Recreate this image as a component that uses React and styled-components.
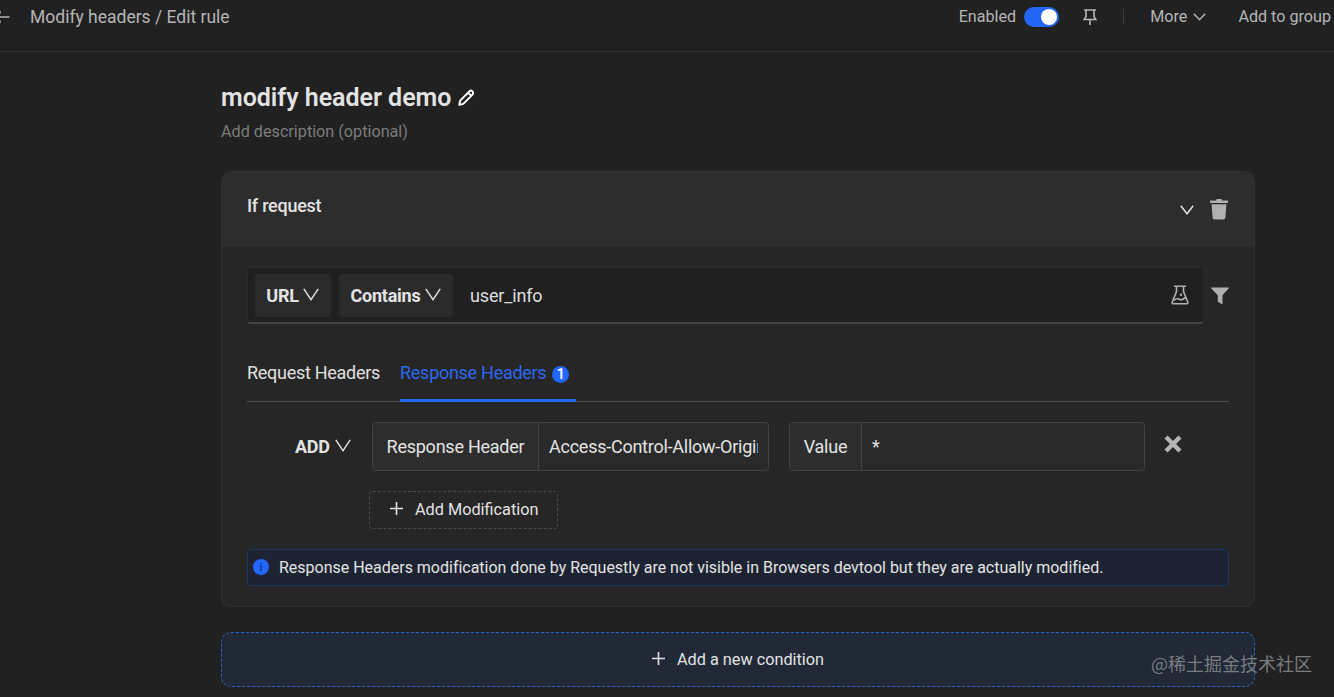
import React from 'react';
import styled, { createGlobalStyle } from 'styled-components';

const GlobalStyle = createGlobalStyle`
  * {
    box-sizing: border-box;
  }
  body {
    margin: 0;
    background: #212121;
    color: #e3e3e3;
    font-family: Roboto, "Noto Sans CJK SC", sans-serif;
    overflow: hidden;
  }
  button, input {
    font-family: inherit;
    color: inherit;
  }
`;

function Chevron({ width, height, stroke = 1.5 }) {
  return (
    <svg width={width} height={height} viewBox={`0 0 ${width} ${height}`}>
      <path
        d={`M.8 .8L${width / 2} ${height - 1.3}L${width - 0.8} .8`}
        fill="none"
        stroke="currentColor"
        strokeWidth={stroke}
      />
    </svg>
  );
}

function Plus() {
  return (
    <svg width="13" height="13" viewBox="0 0 13 13">
      <path d="M6.5 0V13M0 6.5H13" stroke="currentColor" strokeWidth="1.6" />
    </svg>
  );
}

function App() {
  return (
    <Page>
      <GlobalStyle />
      <TopBar>
        <BackIcon width="10" height="14" viewBox="0 0 10 14">
          <path d="M-1 7H9.5M0 3.5V1M0 10.5V13" stroke="currentColor" strokeWidth="1.5" fill="none" />
        </BackIcon>
        <Crumb>Modify headers / Edit rule</Crumb>
        <Enabled>Enabled</Enabled>
        <Toggle><Knob /></Toggle>
        <PinIcon width="14" height="16" viewBox="0 0 14 16">
          <path d="M1 1H13M3 1V7.5L1.2 10.5H12.8L11 7.5V1M7 10.5V16" stroke="currentColor" strokeWidth="1.6" fill="none" />
        </PinIcon>
        <Divider />
        <More>More <Chevron width={13} height={8} stroke={1.6} /></More>
        <Group>Add to group</Group>
      </TopBar>

      <Content>
        <Title>
          <TitleText>modify header demo</TitleText>
          <svg width="17" height="17" viewBox="0 0 16 16">
            <path d="M1.2 14.8L2 11L10.9 2.1Q12.2 .8 13.5 2.1T13.9 5.1L5 14Z M9.5 3.5L12.5 6.5" stroke="#fff" strokeWidth="1.8" fill="none" strokeLinejoin="round" />
          </svg>
        </Title>
        <Description>Add description (optional)</Description>

        <Card>
          <CardHeader>
            <CardTitle>If request</CardTitle>
            <HeaderIcons>
              <Chevron width={14} height={10} />
              <TrashIcon width="18" height="21" viewBox="0 0 18 21">
                <path d="M0 1.4H6L6.6 0H11.4L12 1.4H18V4H0Z M1.6 5.2H16.4L15.4 18.6Q15.2 20.5 13.4 20.5H4.6Q2.8 20.5 2.6 18.6Z" fill="currentColor" />
              </TrashIcon>
            </HeaderIcons>
          </CardHeader>
          <CardBody>
            <SourceRow>
              <SourceBox>
                <Picker $width="76px"><b>URL</b><Chevron width={16} height={13} stroke={1.4} /></Picker>
                <Picker $width="114px"><b>Contains</b><Chevron width={16} height={13} stroke={1.4} /></Picker>
                <SourceValue>user_info</SourceValue>
                <svg width="18" height="20" viewBox="0 0 18 20">
                  <path d="M3 1.2H15M5.5 1.2V6.5L1.2 17.2Q.9 18.8 2.2 18.8H15.8Q17.1 18.8 16.8 17.2L12.5 6.5V1.2M3 15.2Q6 12.8 8.5 14.3T14.6 12.4" stroke="currentColor" strokeWidth="1.6" fill="none" />
                  <circle cx="10" cy="9.8" r="1.2" fill="currentColor" />
                </svg>
              </SourceBox>
              <FilterIcon width="18" height="18" viewBox="0 0 18 18">
                <path d="M.8 .5H17.2Q18.2 .7 17.6 1.6L11.5 8.2V17.5L6.8 14.8V8.2L.4 1.6Q-.2 .7 .8 .5Z" fill="currentColor" />
              </FilterIcon>
            </SourceRow>

            <Tabs>
              <Tab>Request Headers</Tab>
              <Tab $active>Response Headers<Badge>1</Badge></Tab>
            </Tabs>

            <Modification>
              <Action><b>ADD</b><Chevron width={16} height={13} stroke={1.4} /></Action>
              <Field $width="397px">
                <Addon $width="166px">Response Header</Addon>
                <FieldInput defaultValue="Access-Control-Allow-Origin" />
              </Field>
              <Field $width="356px" $gap="20px">
                <Addon $width="72px">Value</Addon>
                <FieldInput defaultValue="*" />
              </Field>
              <RemoveIcon width="18" height="18" viewBox="0 0 18 18">
                <path d="M2 2L16 16M16 2L2 16" stroke="currentColor" strokeWidth="4.4" />
              </RemoveIcon>
            </Modification>

            <AddModification><Plus /><span>Add Modification</span></AddModification>

            <Info>
              <svg width="16" height="16" viewBox="0 0 16 16">
                <circle cx="8" cy="8" r="8" fill="#2166ff" />
                <path d="M8 4V5.2M8 6.2V12" stroke="#1b3f96" strokeWidth="1.8" />
              </svg>
              <InfoText>Response Headers modification done by Requestly are not visible in Browsers devtool but they are actually modified.</InfoText>
            </Info>
          </CardBody>
        </Card>

        <AddCondition><Plus /><span>Add a new condition</span></AddCondition>
      </Content>
      <Watermark>@稀土掘金技术社区</Watermark>
    </Page>
  );
}

export default App;

const Page = styled.div`
  position: relative;
  width: 1334px;
  height: 697px;
  overflow: hidden;
  background: #212121;
`;
const TopBar = styled.div`
  display: flex;
  align-items: center;
  height: 52px;
  padding-bottom: 18px;
  border-bottom: 1px solid #303030;
  color: #b5b5b5;
  font-size: 16.15px;
  white-space: nowrap;
`;
const BackIcon = styled.svg`
  flex: none;
`;
const Crumb = styled.div`
  margin: 0 0 0 20px;
  font-size: 17.5px;
  line-height: 20px;
`;
const Enabled = styled.div`
  margin-left: auto;
`;
const Toggle = styled.div`
  display: flex;
  justify-content: flex-end;
  width: 35px;
  height: 20px;
  margin-left: 8px;
  padding: 2px;
  border-radius: 10px;
  background: #2166f5;
`;
const Knob = styled.div`
  width: 16px;
  height: 16px;
  border-radius: 50%;
  background: #fff;
`;
const PinIcon = styled.svg`
  margin-left: 24px;
`;
const Divider = styled.div`
  width: 1px;
  height: 15px;
  margin-left: 26px;
  background: #3d3d3d;
`;
const More = styled.div`
  display: flex;
  align-items: center;
  gap: 6px;
  margin-left: 26px;
`;
const Group = styled.div`
  margin: 0 3px 0 32px;
`;
const Content = styled.div`
  width: 1034px;
  margin-left: 221px;
`;
const Title = styled.div`
  display: flex;
  align-items: center;
  gap: 7px;
  height: 30px;
  margin-top: 30px;
`;
const TitleText = styled.div`
  font-size: 25px;
  font-weight: 600;
  letter-spacing: -0.03px;
  white-space: nowrap;
`;
const Description = styled.div`
  height: 20px;
  margin-top: 10px;
  color: #7c7c7c;
  font-size: 16.2px;
  line-height: 20px;
`;
const Card = styled.div`
  height: 436px;
  margin-top: 29px;
  border: 1px solid #303030;
  border-radius: 10px;
  background: #262626;
  overflow: hidden;
`;
const CardHeader = styled.div`
  display: flex;
  justify-content: space-between;
  height: 75px;
  padding: 0 26px 0 25px;
  background: #2d2d2d;
`;
const CardTitle = styled.div`
  padding-top: 23px;
  font-size: 18px;
  font-weight: 500;
  letter-spacing: -0.25px;
  line-height: 22px;
`;
const HeaderIcons = styled.div`
  display: flex;
  align-items: center;
  gap: 16px;
`;
const TrashIcon = styled.svg`
  color: #b0b0b0;
`;
const CardBody = styled.div`
  padding: 20px 25px;
`;
const SourceRow = styled.div`
  display: flex;
  align-items: center;
  color: #b0b0b0;
`;
const SourceBox = styled.div`
  display: flex;
  align-items: center;
  width: 957px;
  height: 57px;
  padding: 0 14px 0 7px;
  border: 1px solid #2b2b2b;
  border-bottom: 2px solid #444;
  border-radius: 4px;
  background: #202020;
`;
const Picker = styled.div`
  display: flex;
  align-items: center;
  justify-content: center;
  gap: 4px;
  width: ${(props) => props.$width};
  height: 43px;
  margin-right: 8px;
  padding-right: 1px;
  border-radius: 4px;
  background: #2b2b2b;
  color: #e3e3e3;
  font-size: 18px;
  letter-spacing: -0.23px;

  svg {
    margin-top: -2px;
  }
`;
const SourceValue = styled.div`
  flex: 1;
  padding-left: 9px;
  color: #dedede;
  font-size: 18px;
  letter-spacing: -0.15px;
`;
const FilterIcon = styled.svg`
  margin-left: 7px;
`;
const Tabs = styled.div`
  display: flex;
  gap: 20px;
  height: 54px;
  margin-top: 24px;
  border-bottom: 1px solid #4c4c4c;
`;
const Tab = styled.div`
  display: flex;
  align-items: center;
  height: 54px;
  padding: 0 ${(props) => (props.$active ? '7px' : '0')} 2px 0;
  border-bottom: 3px solid ${(props) => (props.$active ? '#2469ec' : 'transparent')};
  color: ${(props) => (props.$active ? '#2b69ef' : '#e0e0e0')};
  font-size: 18px;
  letter-spacing: -0.28px;
  white-space: nowrap;
`;
const Badge = styled.div`
  width: 17px;
  height: 17px;
  margin: 3px 0 0 6px;
  border-radius: 50%;
  background: #2166ff;
  color: #fff;
  font-size: 15px;
  font-weight: 500;
  letter-spacing: 0;
  line-height: 17px;
  text-align: center;
`;
const Modification = styled.div`
  display: flex;
  align-items: center;
  margin-top: 20px;
`;
const Action = styled.div`
  display: flex;
  align-items: center;
  gap: 5px;
  width: 125px;
  padding-left: 48px;
  font-size: 18px;
  letter-spacing: -0.25px;

  svg {
    margin-top: -3px;
  }
`;
const Field = styled.div`
  display: flex;
  flex: none;
  width: ${(props) => props.$width};
  height: 49px;
  margin-left: ${(props) => props.$gap || '0'};
  border: 1px solid #424242;
  border-radius: 4px;
  background: #2a2a2a;
  overflow: hidden;
`;
const Addon = styled.div`
  display: flex;
  flex: none;
  align-items: center;
  justify-content: center;
  width: ${(props) => props.$width};
  border-right: 1px solid #424242;
  background: #2d2d2d;
  font-size: 18px;
  letter-spacing: -0.24px;
  white-space: nowrap;
`;
const FieldInput = styled.input`
  flex: 1;
  min-width: 0;
  padding: 0 10px;
  border: 0;
  outline: 0;
  background: transparent;
  font-size: 18px;
  letter-spacing: -0.25px;
`;
const RemoveIcon = styled.svg`
  margin: -5px 0 0 19px;
  color: #b5b5b5;
`;
const AddModification = styled.button`
  display: flex;
  align-items: center;
  gap: 12px;
  width: 189px;
  height: 38px;
  margin: 20px 0 0 122px;
  padding: 0 0 1px 20px;
  border: 1px dashed #494949;
  border-radius: 4px;
  background: #262626;
  font-size: 16.25px;
  white-space: nowrap;

  svg {
    margin-top: -2px;
  }
`;
const Info = styled.div`
  display: flex;
  align-items: center;
  gap: 10px;
  height: 37px;
  margin-top: 20px;
  padding-left: 5px;
  border: 1px solid #1d385d;
  border-radius: 4px;
  background: #1e2333;

  svg {
    margin-top: -1px;
  }
`;
const InfoText = styled.div`
  font-size: 16px;
  letter-spacing: -0.01px;
  white-space: nowrap;
`;
const AddCondition = styled.button`
  display: flex;
  align-items: center;
  justify-content: center;
  gap: 12px;
  width: 1034px;
  height: 55px;
  margin-top: 25px;
  padding: 0;
  border: 1px dashed #2b65c9;
  border-radius: 10px;
  background: #212936;
  font-size: 16.25px;

  svg {
    margin-top: -3px;
  }
`;
const Watermark = styled.div`
  position: absolute;
  right: 22px;
  bottom: 21px;
  color: #787b80;
  font-family: "Noto Sans CJK SC", sans-serif;
  font-size: 18px;
  line-height: 26px;
`;
